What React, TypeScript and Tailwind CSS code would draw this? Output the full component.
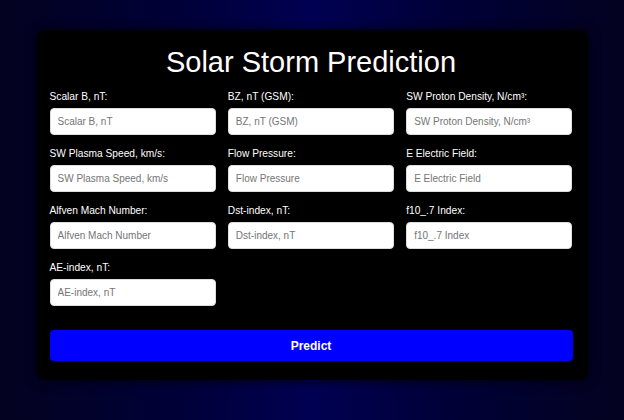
const fields = [
  ["Scalar B, nT:", "Scalar B, nT"],
  ["BZ, nT (GSM):", "BZ, nT (GSM)"],
  ["SW Proton Density, N/cm³:", "SW Proton Density, N/cm³"],
  ["SW Plasma Speed, km/s:", "SW Plasma Speed, km/s"],
  ["Flow Pressure:", "Flow Pressure"],
  ["E Electric Field:", "E Electric Field"],
  ["Alfven Mach Number:", "Alfven Mach Number"],
  ["Dst-index, nT:", "Dst-index, nT"],
  ["f10_.7 Index:", "f10_.7 Index"],
  ["AE-index, nT:", "AE-index, nT"],
];

export default function App() {
  return (
    <div className="h-[420px] w-full overflow-hidden bg-[linear-gradient(to_right,#03021f_0%,#00003a_30%,#000052_50%,#00003a_70%,#03021f_100%)] pt-[30px] font-['Liberation_Sans',Arial,sans-serif]">
      <div className="mx-auto w-[551px] rounded-lg bg-black pl-[13px] pr-[15px] pt-[15px] pb-[19px] shadow-[0_0_12px_rgba(0,0,0,0.8)]">
        <h1 className="mb-3 text-center text-[29px] leading-[34px] text-white">Solar Storm Prediction</h1>

        <div className="grid grid-cols-3 gap-x-3 gap-y-[13px]">
          {fields.map(([label, ph]) => (
            <div key={label} className="flex flex-col">
              <label className="mb-[5px] text-[10.2px] leading-[12px] text-white">{label}</label>
              <input
                type="text"
                placeholder={ph}
                className="h-[27px] w-full rounded-[4px] border border-[#ddd] bg-white px-[7px] text-[10px] text-black outline-none placeholder:text-[#757575]"
              />
            </div>
          ))}
        </div>

        <button className="mt-6 h-[31px] w-full rounded-[4px] bg-[#0000ff] text-[12px] font-bold text-white">
          Predict
        </button>
      </div>
    </div>
  );
}
